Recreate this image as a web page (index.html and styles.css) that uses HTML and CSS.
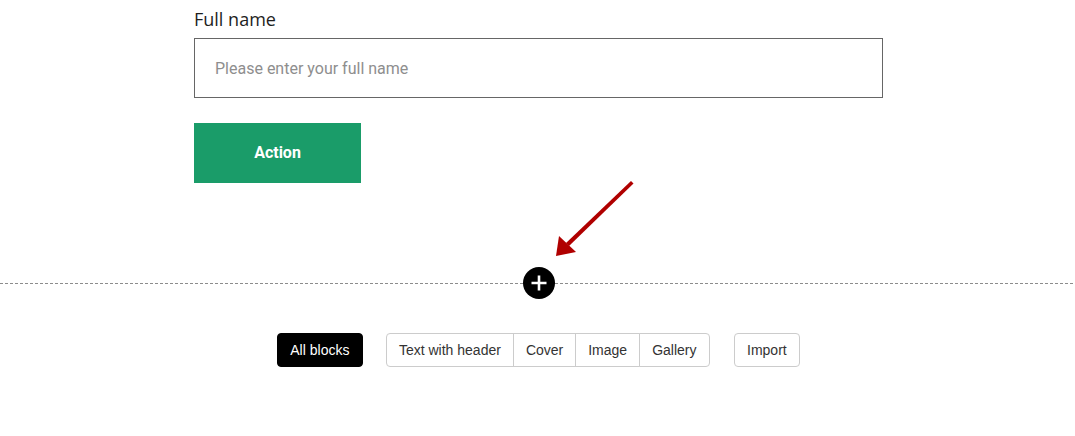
FILE: index.html
```html
<!DOCTYPE html>
<html>
<head>
  <link rel="stylesheet" href="styles.css">
</head>
<body>

<div class="block">
  <form class="form" action="/submit">
    <label class="form-label" for="full_name">Full name</label>
    <input class="form-input" type="text" id="full_name" name="full_name" placeholder="Please enter your full name">
    <button class="action-button" type="submit">Action</button>
  </form>
</div>

<div class="insert-zone">
  <div class="insert-line"></div>
  <button class="insert-button" title="Add block">
    <svg width="32" height="32" viewBox="0 0 32 32">
      <circle cx="16" cy="16" r="16" fill="#000"/>
      <path d="M16 8.5v15M8.5 16h15" stroke="#fff" stroke-width="2.6" stroke-linecap="butt"/>
    </svg>
  </button>
  <svg class="hint-arrow" width="90" height="90" viewBox="0 0 90 90">
    <path d="M83 2 L85.5 4.5 L21 67 L18 64 Z" fill="#b00000"/>
    <path d="M8 77 L11 57 L28 73 Z" fill="#b00000"/>
  </svg>
</div>

<div class="block-menu">
  <button class="menu-button menu-button-active">All blocks</button>
  <div class="menu-group">
    <button class="menu-button">Text with header</button>
    <button class="menu-button">Cover</button>
    <button class="menu-button">Image</button>
    <button class="menu-button">Gallery</button>
  </div>
  <button class="menu-button menu-button-wide">Import</button>
</div>

</body>
</html>
```

FILE: styles.css
```css
body {
  margin: 0;
  background: #fff;
}

.block {
  width: 689px;
  margin: 0 auto;
  padding: 7px 0 0 2px;
}

.form {
  display: flex;
  flex-direction: column;
  align-items: flex-start;
}

.form-label {
  font-family: "Open Sans", sans-serif;
  font-size: 18px;
  line-height: 24px;
  color: #1e1e1e;
  margin-bottom: 7px;
}

.form-input {
  box-sizing: border-box;
  width: 100%;
  height: 60px;
  border: 1px solid #666;
  padding: 0 20px;
  font-family: Roboto, sans-serif;
  font-size: 16px;
  color: #333;
  outline: none;
}

.form-input::placeholder {
  color: #8e8e8e;
}

.action-button {
  margin-top: 25px;
  width: 167px;
  height: 60px;
  padding: 0 0 2px;
  border: none;
  background-color: #1a9c69;
  color: #fff;
  font-family: Roboto, sans-serif;
  font-weight: 700;
  font-size: 16px;
  cursor: pointer;
}

.insert-zone {
  position: relative;
  margin-top: 100px;
  height: 1px;
}

.insert-line {
  height: 1px;
  background: repeating-linear-gradient(to right, #8c8c8c 0 3px, transparent 3px 5px);
}

.insert-button {
  position: absolute;
  left: 523px;
  top: -16px;
  width: 32px;
  height: 32px;
  padding: 0;
  border: none;
  background: none;
  cursor: pointer;
}

.insert-button svg {
  display: block;
}

.hint-arrow {
  position: absolute;
  left: 548px;
  top: -104px;
}

.block-menu {
  display: flex;
  justify-content: center;
  gap: 23px;
  margin-top: 49px;
  padding-left: 2px;
}

.menu-group {
  display: flex;
}

.menu-button {
  height: 34px;
  padding: 0 12px;
  border: 1px solid #ccc;
  border-radius: 4px;
  background: #fff;
  color: #333;
  font-family: "Liberation Sans", Arial, sans-serif;
  font-size: 14px;
  cursor: pointer;
}

.menu-button-active {
  background: #000;
  border-color: #000;
  color: #fff;
  padding: 0 12.5px;
}

.menu-button-wide {
  padding: 0 12.5px;
  margin-left: 1px;
}

.menu-group .menu-button {
  border-radius: 0;
  margin-left: -1px;
}

.menu-group .menu-button:first-child {
  border-radius: 4px 0 0 4px;
  margin-left: 0;
}

.menu-group .menu-button:last-child {
  border-radius: 0 4px 4px 0;
}
```
